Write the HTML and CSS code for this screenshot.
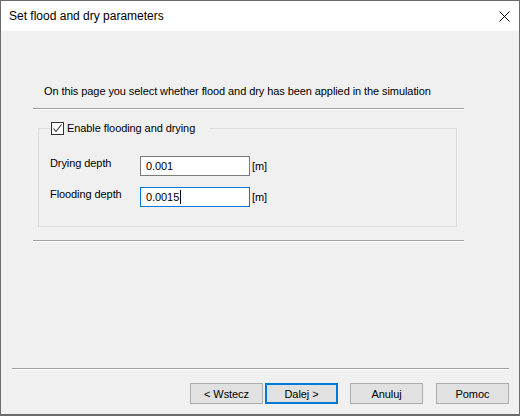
FILE: index.html
```html
<!DOCTYPE html>
<html>
<head>
<meta charset="utf-8">
<link rel="stylesheet" href="styles.css">
</head>
<body>
<div class="window">
  <div class="titlebar">
    <span class="title">Set flood and dry parameters</span>
    <svg class="close" width="11" height="11" viewBox="0 0 11 11"><path d="M0.5 0.5L10.5 10.5M10.5 0.5L0.5 10.5" stroke="#000" stroke-width="1" fill="none"/></svg>
  </div>
  <div class="body">
    <div class="page">
      <p class="intro">On this page you select whether flood and dry has been applied in the simulation</p>
      <div class="sep"></div>
      <fieldset class="group">
        <legend class="legend"><span class="check"><svg width="11" height="11" viewBox="0 0 11 11"><path d="M1.5 5.5L4 8.5L9.5 1.5" stroke="#333" stroke-width="1.1" fill="none"/></svg></span><span class="legend-text">Enable flooding and drying</span></legend>
        <div class="row">
          <span class="label">Drying depth</span>
          <div class="edit">0.001</div>
          <span class="unit">[m]</span>
        </div>
        <div class="row second">
          <span class="label">Flooding depth</span>
          <div class="edit focus">0.0015<span class="caret"></span></div>
          <span class="unit">[m]</span>
        </div>
      </fieldset>
      <div class="sep sep2"></div>
    </div>
    <div class="footer">
      <div class="sep wide"></div>
      <div class="buttons">
        <div class="btn">&lt; Wstecz</div>
        <div class="btn default">Dalej &gt;</div>
        <div class="btn gap">Anuluj</div>
        <div class="btn gap2">Pomoc</div>
      </div>
    </div>
  </div>
</div>
</body>
</html>
```
FILE: styles.css
```css
* { box-sizing: border-box; }
html, body { margin: 0; padding: 0; }
body {
  width: 520px;
  height: 416px;
  background: #3a3a3a;
  font-family: "Liberation Sans", Arial, sans-serif;
  font-size: 11px;
  letter-spacing: -0.08px;
  color: #000;
}
.window {
  width: 520px;
  height: 416px;
  border: 1px solid #6b6b6b;
  border-bottom-width: 2px;
  background: #f0f0f0;
  display: flex;
  flex-direction: column;
}
.titlebar {
  height: 30px;
  background: #fff;
  display: flex;
  align-items: center;
  padding-left: 8px;
  flex: none;
}
.title {
  font-size: 12px;
  line-height: 16px;
  letter-spacing: 0;
  flex: 1;
}
.close {
  margin-right: 9px;
  display: block;
}
.body {
  flex: 1;
  display: flex;
  flex-direction: column;
}
.page {
  margin-left: 32px;
  width: 431px;
}
.intro {
  margin: 52px 0 0 0;
  padding-left: 11px;
  line-height: 16px;
  white-space: nowrap;
}
.sep {
  height: 2px;
  border-top: 1px solid #a0a0a0;
  border-bottom: 1px solid #ffffff;
  margin-top: 9px;
}
.group {
  margin: 10px 7px 0 5px;
  border: 1px solid #dcdcdc;
  padding: 20px 0 19px 11px;
  min-width: 0;
}
.legend {
  padding: 0 15px 0 1px;
  display: flex;
  align-items: center;
  height: 16px;
  line-height: 16px;
}
.check {
  width: 13px;
  height: 13px;
  border: 1px solid #333;
  background: #fff;
  display: inline-flex;
  align-items: center;
  justify-content: center;
  margin-right: 3px;
}
.check svg { display: block; }
.row {
  display: flex;
  align-items: flex-start;
  height: 20px;
}
.row.second { margin-top: 11px; }
.label {
  width: 90px;
  line-height: 16px;
  margin-top: -1px;
}
.edit {
  width: 110px;
  height: 20px;
  border: 1px solid #7a7a7a;
  background: #fff;
  padding: 0 5px;
  line-height: 18px;
  display: flex;
  align-items: center;
}
.edit.focus { border-color: #0078d7; }
.caret {
  width: 1px;
  height: 14px;
  background: #000;
  margin-left: 1px;
}
.unit {
  margin-left: 2px;
  line-height: 20px;
}
.sep2 { margin-top: 13px; }
.footer {
  margin-top: auto;
  padding-bottom: 10px;
}
.sep.wide {
  margin: 0 10px 0 11px;
}
.buttons {
  display: flex;
  justify-content: flex-end;
  padding-right: 10px;
  margin-top: 13px;
}
.btn {
  width: 73px;
  height: 21px;
  background: #e1e1e1;
  border: 1px solid #adadad;
  display: flex;
  align-items: center;
  justify-content: center;
  line-height: 16px;
}
.btn.default {
  border: 2px solid #0078d7;
  margin-left: 2px;
}
.btn.gap { margin-left: 12px; }
.btn.gap2 { margin-left: 13px; }
```
